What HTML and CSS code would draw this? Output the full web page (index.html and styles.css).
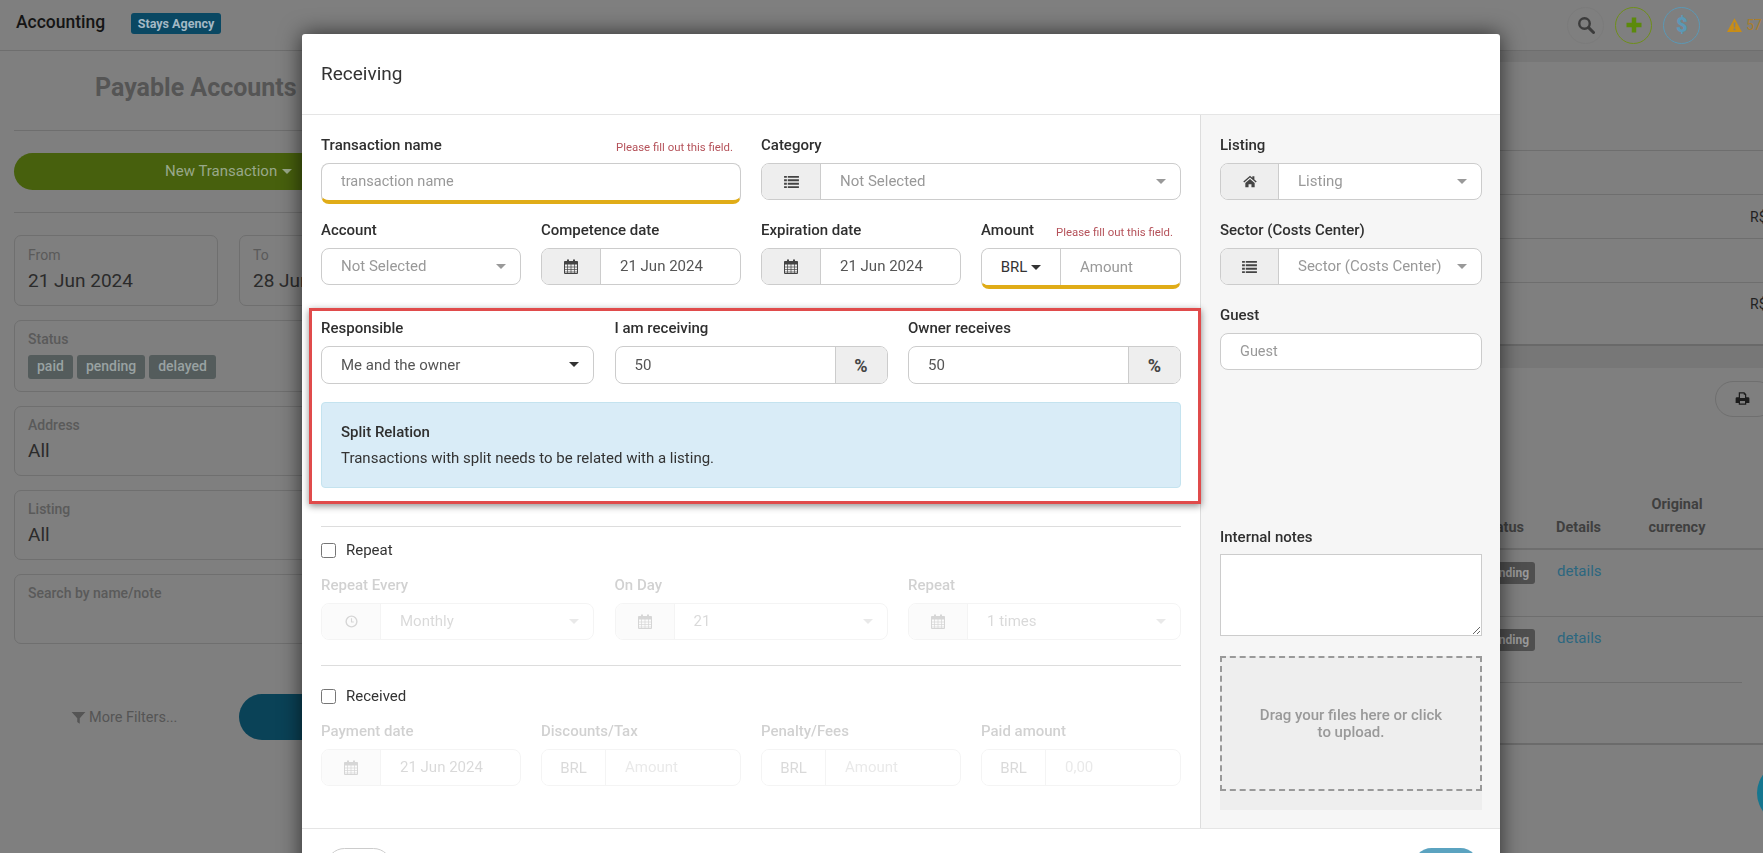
FILE: index.html
```html
<!DOCTYPE html>
<html lang="en">
<head>
<meta charset="utf-8">
<title>Accounting</title>
<link rel="stylesheet" href="styles.css">
</head>
<body>
<svg class="defs" width="0" height="0" aria-hidden="true">
  <symbol id="i-cal" viewBox="0 0 14 15"><path d="M3 0.5h2v2.5h-2zM9 0.5h2v2.5h-2z" fill="currentColor"/><path d="M0.5 2.5h13v12h-13z" fill="none" stroke="currentColor"/><path d="M0.5 2.5h13v3h-13z" fill="currentColor"/><path d="M0.5 8h13M0.5 10.5h13M0.5 13h13M3.5 5v9.5M7 5v9.5M10.5 5v9.5" stroke="currentColor" stroke-width=".7" fill="none"/></symbol>
  <symbol id="i-list" viewBox="0 0 16 14"><path d="M0 1h3v2h-3zM4 1h12v2h-12zM0 4.7h3v2h-3zM4 4.7h12v2h-12zM0 8.4h3v2h-3zM4 8.4h12v2h-12zM0 12h3v2h-3zM4 12h12v2h-12z" fill="currentColor"/></symbol>
  <symbol id="i-home" viewBox="0 0 24 22"><path d="M12 1 0.5 11l1.6 1.8L12 4.2l9.9 8.6 1.6-1.8-4-3.5V2h-3.500v2.400z" fill="currentColor"/><path d="M4 13.500 12 6.500l8 7V21h-5.500v-5.500h-5V21H4z" fill="currentColor"/></symbol>
  <symbol id="i-clock" viewBox="0 0 14 14"><circle cx="7" cy="7" r="5.800" fill="none" stroke="currentColor" stroke-width="1.500"/><path d="M7 3.500V7.500H9.500" fill="none" stroke="currentColor" stroke-width="1.200"/></symbol>
  <symbol id="i-search" viewBox="0 0 24 24"><circle cx="10" cy="10" r="7" fill="none" stroke="currentColor" stroke-width="3.200"/><path d="M15.500 15.500 22 22" stroke="currentColor" stroke-width="4" stroke-linecap="round"/></symbol>
  <symbol id="i-plus" viewBox="0 0 24 24"><path d="M9 2h6v7h7v6h-7v7H9v-7H2V9h7z" fill="currentColor"/></symbol>
  <symbol id="i-warn" viewBox="0 0 24 22"><path fill-rule="evenodd" d="M12 0 24 22H0zM10.500 7l.5 8h2l.5-8zM10.500 16.500v3h3v-3z" fill="currentColor"/></symbol>
  <symbol id="i-filter" viewBox="0 0 24 24"><path d="M1 3h22l-9 10v9l-4-3v-6z" fill="currentColor"/></symbol>
  <symbol id="i-print" viewBox="0 0 24 24"><path fill-rule="evenodd" d="M6 2h9l3 3v5h3a2 2 0 0 1 2 2v7h-5v3H6v-3H1v-7a2 2 0 0 1 2-2h3zM8 4v7h8V6h-2V4zM8 16v4h8v-4z" fill="currentColor"/></symbol>
</svg>

<div class="page">
  <header class="topbar">
    <div class="brand"><span class="brand-name">Accounting</span><span class="brand-badge">Stays Agency</span></div>
    <div class="top-actions">
      <span class="round round-grey"><svg class="i18"><use href="#i-search"/></svg></span>
      <span class="round round-green"><svg class="i18"><use href="#i-plus"/></svg></span>
      <span class="round round-blue">$</span>
      <span class="alerts"><svg class="i-alert"><use href="#i-warn"/></svg>57</span>
    </div>
  </header>

  <div class="content">
    <aside class="filters">
      <h1 class="page-title">Payable Accounts</h1>
      <hr class="rule">
      <button class="btn-new">New Transaction <i class="caret caret-light"></i></button>
      <hr class="rule rule-b">
      <div class="date-row">
        <div class="fcard"><div class="fcard-label">From</div><div class="fcard-value">21 Jun 2024</div></div>
        <div class="fcard"><div class="fcard-label">To</div><div class="fcard-value">28 Jun 2024</div></div>
      </div>
      <div class="fcard fcard-status">
        <div class="fcard-label">Status</div>
        <div class="tags"><span class="tag">paid</span><span class="tag">pending</span><span class="tag">delayed</span></div>
      </div>
      <div class="fcard"><div class="fcard-label">Address</div><div class="fcard-value">All</div></div>
      <div class="fcard"><div class="fcard-label">Listing</div><div class="fcard-value">All</div></div>
      <div class="fcard"><div class="fcard-label">Search by name/note</div></div>
      <div class="filter-actions">
        <span class="more"><svg class="i15"><use href="#i-filter"/></svg> More Filters...</span>
        <button class="btn-search">Search</button>
      </div>
    </aside>

    <main class="results">
      <div class="band"></div>
      <div class="summary summary-top"></div>
      <div class="summary summary-s"></div>
      <div class="summary summary-s summary-value"><span>R$ 0,00</span></div>
      <div class="summary summary-s"></div>
      <div class="summary summary-l summary-value"><span>R$ 0,00</span></div>
      <div class="band band-b"></div>
      <section class="panel">
        <div class="print-row"><button class="btn-print"><svg class="i15"><use href="#i-print"/></svg></button></div>
        <div class="trow thead">
          <div class="tc-status">Status</div><div class="tc-details">Details</div><div class="tc-orig">Original currency</div>
        </div>
        <div class="trow">
          <div class="tc-status"><span class="badge">pending</span></div><div class="tc-details"><span class="link">details</span></div><div></div>
        </div>
        <div class="trow trow-last">
          <div class="tc-status"><span class="badge">pending</span></div><div class="tc-details"><span class="link">details</span></div><div></div>
        </div>
      </section>
    </main>
  </div>
  <div class="fab"></div>
</div>

<div class="backdrop">
  <div class="modal">
    <div class="modal-head">Receiving</div>
    <div class="modal-body">
      <div class="modal-main">
        <div class="grid4">
          <div class="field span2">
            <div class="label-row"><label>Transaction name</label><span class="error">Please fill out this field.</span></div>
            <div class="group invalid"><input class="val val-small" placeholder="transaction name"></div>
          </div>
          <div class="field span2">
            <div class="label-row"><label>Category</label></div>
            <div class="group"><span class="addon"><svg class="i-list"><use href="#i-list"/></svg></span><div class="val muted">Not Selected<i class="caret"></i></div></div>
          </div>
          <div class="field">
            <div class="label-row"><label>Account</label></div>
            <div class="group"><div class="val muted">Not Selected<i class="caret"></i></div></div>
          </div>
          <div class="field">
            <div class="label-row"><label>Competence date</label></div>
            <div class="group"><span class="addon"><svg class="i-cal"><use href="#i-cal"/></svg></span><div class="val">21 Jun 2024</div></div>
          </div>
          <div class="field">
            <div class="label-row"><label>Expiration date</label></div>
            <div class="group"><span class="addon"><svg class="i-cal"><use href="#i-cal"/></svg></span><div class="val">21 Jun 2024</div></div>
          </div>
          <div class="field">
            <div class="label-row"><label>Amount</label><span class="error">Please fill out this field.</span></div>
            <div class="group invalid"><span class="addon addon-cur">BRL <i class="caret caret-dark"></i></span><input class="val" placeholder="Amount"></div>
          </div>
        </div>

        <section class="highlight">
          <div class="grid3">
            <div class="field">
              <div class="label-row"><label>Responsible</label></div>
              <div class="group"><div class="val">Me and the owner<i class="caret caret-dark"></i></div></div>
            </div>
            <div class="field">
              <div class="label-row"><label>I am receiving</label></div>
              <div class="group"><input class="val" value="50"><span class="addon addon-end">%</span></div>
            </div>
            <div class="field">
              <div class="label-row"><label>Owner receives</label></div>
              <div class="group"><input class="val" value="50"><span class="addon addon-end">%</span></div>
            </div>
          </div>
          <div class="alert">
            <strong>Split Relation</strong>
            <p>Transactions with split needs to be related with a listing.</p>
          </div>
        </section>

        <hr class="mrule mrule-first">
        <label class="check"><input type="checkbox">Repeat</label>
        <div class="grid3 disabled">
          <div class="field">
            <div class="label-row"><label>Repeat Every</label></div>
            <div class="group"><span class="addon"><svg class="i-clock"><use href="#i-clock"/></svg></span><div class="val">Monthly<i class="caret"></i></div></div>
          </div>
          <div class="field">
            <div class="label-row"><label>On Day</label></div>
            <div class="group"><span class="addon"><svg class="i-cal"><use href="#i-cal"/></svg></span><div class="val">21<i class="caret"></i></div></div>
          </div>
          <div class="field">
            <div class="label-row"><label>Repeat</label></div>
            <div class="group"><span class="addon"><svg class="i-cal"><use href="#i-cal"/></svg></span><div class="val">1 times<i class="caret"></i></div></div>
          </div>
        </div>

        <hr class="mrule">
        <label class="check check-b"><input type="checkbox">Received</label>
        <div class="grid4 disabled">
          <div class="field">
            <div class="label-row"><label>Payment date</label></div>
            <div class="group"><span class="addon"><svg class="i-cal"><use href="#i-cal"/></svg></span><div class="val">21 Jun 2024</div></div>
          </div>
          <div class="field">
            <div class="label-row"><label>Discounts/Tax</label></div>
            <div class="group"><span class="addon addon-brl">BRL</span><div class="val muted">Amount</div></div>
          </div>
          <div class="field">
            <div class="label-row"><label>Penalty/Fees</label></div>
            <div class="group"><span class="addon addon-brl">BRL</span><div class="val muted">Amount</div></div>
          </div>
          <div class="field">
            <div class="label-row"><label>Paid amount</label></div>
            <div class="group"><span class="addon addon-brl">BRL</span><div class="val muted">0,00</div></div>
          </div>
        </div>
      </div>

      <aside class="modal-side">
        <div class="field">
          <div class="label-row"><label>Listing</label></div>
          <div class="group"><span class="addon"><svg class="i-home"><use href="#i-home"/></svg></span><div class="val muted">Listing<i class="caret"></i></div></div>
        </div>
        <div class="field">
          <div class="label-row"><label>Sector (Costs Center)</label></div>
          <div class="group"><span class="addon"><svg class="i-list"><use href="#i-list"/></svg></span><div class="val muted">Sector (Costs Center)<i class="caret"></i></div></div>
        </div>
        <div class="field">
          <div class="label-row"><label>Guest</label></div>
          <div class="group"><input class="val val-small" placeholder="Guest"></div>
        </div>
        <div class="notes">
          <div class="label-row label-row-notes"><label>Internal notes</label></div>
          <textarea class="notes-input"></textarea>
        </div>
        <div class="upload"><div class="drop">Drag your files here or click to upload.</div></div>
      </aside>
    </div>
    <div class="modal-foot">
      <button class="btn-cancel">Cancel</button>
      <button class="btn-save">Save</button>
    </div>
  </div>
</div>
</body>
</html>
```

FILE: styles.css
```css
* { box-sizing: border-box; }
html, body { margin: 0; height: 100%; overflow: hidden; }
body { background: #7f7f7f; color: #2b2b2b; font-family: Roboto, "Liberation Sans", sans-serif; font-size: 14px; }
button { font-family: inherit; }
.defs { position: absolute; }

/* Background page */
.page { position: relative; height: 853px; overflow: hidden; }
.topbar { height: 51px; border-bottom: 1px solid #6e6e6e; display: flex; justify-content: space-between; align-items: center; padding: 0 0 6px 16px; }
.brand { display: flex; align-items: center; }
.brand-name { font-size: 17.500px; font-weight: 500; color: #151515; width: 115px; }
.brand-badge { background: #0a4863; color: #a3b9c5; font-size: 12.500px; font-weight: 700; height: 21px; line-height: 21px; border-radius: 3px; margin-top: 2px; width: 90px; text-align: center; white-space: nowrap; }
.top-actions { display: flex; align-items: center; margin-top: 6px; }
.round { width: 37px; height: 37px; border-radius: 50%; border: 1.500px solid #777; display: flex; align-items: center; justify-content: center; margin-right: 11px; }
.round-grey { color: #3c3c3c; border-color: #7b7b7b; }
.round-green { color: #5c8a0c; border-color: #6f8f1a; }
.round-blue { color: #5b98b5; border-color: #5b98b5; font-size: 20px; font-weight: 900; }
.i18 { width: 18px; height: 18px; }
.i15 { width: 15px; height: 15px; }
.alerts { display: flex; align-items: center; color: #a97d2c; font-size: 14px; margin-left: 16px; margin-right: 1px; }
.i-alert { width: 15px; height: 14px; color: #c98d16; margin-right: 4px; }

.content { display: flex; }
.filters { width: 429px; margin-left: 14px; flex: none; }
.page-title { margin: 0; height: 79px; padding: 22px 0 0 81px; font-size: 25px; line-height: 30px; font-weight: 700; color: #555; }
.rule { border: 0; border-top: 1px solid #6e6e6e; margin: 0; }
.rule-b { margin-bottom: 22px; }
.btn-new { display: block; width: 100%; height: 37px; border: 0; border-radius: 19px; margin: 22px 0; padding: 0 0 2px; background: #47600d; color: #99a88a; font-size: 15px; }
.caret { display: inline-block; border: 5.500px solid transparent; border-top-color: #999; border-bottom: 0; margin-left: auto; }
.caret-light { border-top-color: #99a88a; margin-left: 1px; vertical-align: 2px; }
.caret-dark { border-top-color: #333; }
.date-row { display: grid; grid-template-columns: 204px 204px; gap: 21px; }
.fcard { border: 1px solid #6f6f6f; border-radius: 7px; height: 70px; padding: 9px 13px; margin-bottom: 14px; }
.date-row .fcard { height: 71px; padding-top: 10px; }
.fcard-label { color: #5a5a5a; font-size: 14px; line-height: 18px; font-weight: 500; }
.date-row .fcard-label { font-weight: 400; }
.fcard-value { color: #2b2b2b; font-size: 19px; line-height: 26px; margin-top: 4px; white-space: nowrap; }
.fcard-status { height: 72px; }
.tags { display: flex; gap: 4px; margin-top: 7px; }
.tag { background: #545c5c; color: #99a2a2; font-size: 14px; font-weight: 500; height: 24px; line-height: 22px; padding: 0 9px; border-radius: 3px; }
.filter-actions { display: grid; grid-template-columns: 204px 204px; gap: 21px; margin-top: 50px; align-items: center; }
.more { color: #555; font-size: 14.500px; display: flex; align-items: center; gap: 3px; padding-left: 57px; white-space: nowrap; }
.btn-search { height: 46px; border: 0; border-radius: 23px; background: #0a4257; color: #a3b9c5; font-size: 14px; }

.results { flex: 1; min-width: 0; margin-left: 20px; }
.band { height: 11px; background: #777; }
.band-b { height: 22px; }
.summary { border-bottom: 1px solid #6e6e6e; display: flex; align-items: center; justify-content: flex-end; color: #222; }
.summary span { width: 13px; overflow: hidden; white-space: nowrap; font-size: 14px; }
.summary-top { height: 89px; }
.summary-s { height: 44px; }
.summary-l { height: 63px; border-bottom: 2px solid #696969; padding-bottom: 20px; }
.panel { height: 377px; border-bottom: 2px solid #6b6b6b; position: relative; padding-top: 13px; }
.print-row { display: flex; justify-content: flex-end; margin-right: -12px; height: 36px; margin-bottom: 67px; }
.btn-print { width: 60px; height: 36px; border: 1px solid #6f6f6f; border-radius: 18px; background: none; color: #1c1c1c; text-align: left; padding: 2px 0 0 19px; }
.trow { display: grid; grid-template-columns: minmax(0, 1fr) 87px 110px 31px; height: 67px; border-bottom: 1px solid #6e6e6e; padding-top: 12px; font-size: 15px; }
.thead { height: 66px; border-bottom: 2px solid #6e6e6e; padding: 0; align-items: end; font-weight: 700; color: #3f3f3f; font-size: 14.500px; }
.thead > div { padding-bottom: 9px; line-height: 23px; }
.thead .tc-status { padding-right: 11px; }
.thead .tc-details { padding-left: 21px; }
.thead .tc-orig { padding: 0 20px 9px; }
.trow-last { margin-right: 21px; height: 66px; grid-template-columns: minmax(0, 1fr) 87px 110px 10px; }
.tc-status { text-align: right; }
.tc-details { padding-left: 22px; }
.tc-orig { text-align: center; }
.badge { display: inline-block; background: #4f4f4f; color: #999; font-size: 12px; font-weight: 700; height: 22px; line-height: 22px; padding: 0 6px; border-radius: 3px; }
.link { color: #2c6780; }
.fab { position: absolute; left: 1757px; top: 762px; width: 62px; height: 62px; border-radius: 50%; background: #15768f; }

/* Modal */
.backdrop { position: fixed; inset: 0; padding: 34px 0 0 302px; }
.modal { width: 1198px; background: #fff; border-radius: 3px 3px 0 0; box-shadow: 0 0 22px rgba(0,0,0,.65); color: #333; }
.modal-head { height: 81px; border-bottom: 1px solid #e5e5e5; padding-left: 19px; font-size: 19px; line-height: 79px; }
.modal-body { display: flex; height: 713px; }
.modal-main { width: 899px; flex: none; border-right: 1px solid #ddd; padding: 20px 19px 0; }
.modal-side { flex: 1; background: #f6f6f6; padding: 20px 18px 0 19px; min-width: 0; }
.modal-side .field { margin-bottom: 20px; }
.modal-side .addon { width: 58px; }
.modal-foot { display: flex; justify-content: space-between; border-top: 1px solid #e5e5e5; padding: 19px 21px 0 24px; height: 60px; }
.btn-cancel, .btn-save { width: 66px; height: 37px; border-radius: 19px; font-size: 14px; flex: none; }
.btn-cancel { background: #fff; border: 1px solid #ccc; color: #333; }
.btn-save { background: #5ba3c0; border: 0; color: #fff; }

.grid4 { display: grid; grid-template-columns: repeat(4, minmax(0, 1fr)); gap: 20px; }
.grid3 { display: grid; grid-template-columns: repeat(3, minmax(0, 1fr)); gap: 20.500px; }
.span2 { grid-column: span 2; }
.label-row { display: flex; justify-content: space-between; height: 20px; margin-bottom: 8px; align-items: center; }
.label-row label { font-weight: 500; font-size: 15px; color: #2f2f2f; white-space: nowrap; }
.error { color: #b5525a; font-size: 11.400px; padding: 4px 8px 0 0; white-space: nowrap; }
.group { display: flex; height: 37px; border: 1px solid #ccc; border-radius: 8px; overflow: hidden; background: #fff; }
.group.invalid { height: 41px; margin-bottom: -4px; border-bottom: 4px solid #e0ac17; }
.highlight .group { height: 38px; }
.addon { width: 59px; flex: none; background: #eee; border-right: 1px solid #ccc; display: flex; align-items: center; justify-content: center; color: #444; }
.addon-end { width: 52px; border-right: 0; border-left: 1px solid #ccc; font-weight: 700; font-size: 18px; }
.addon-cur { width: 79px; background: #fff; color: #333; gap: 4px; font-size: 15px; }
.addon-cur .caret { margin-left: 0; }
.addon-brl { width: 64px; background: #fff; color: #555; font-size: 15px; }
.val { flex: 1; min-width: 0; border: 0; outline: 0; padding: 0 14px 1px 19px; display: flex; align-items: center; font: 15px Roboto, "Liberation Sans", sans-serif; color: #555; background: transparent; white-space: nowrap; }
.val-small { font-size: 14.500px; }
.val::placeholder { color: #999; opacity: 1; }
.val.muted { color: #999; }
.i-list { width: 15px; height: 13px; }
.i-cal { width: 14px; height: 15px; }
.i-home { width: 14px; height: 13px; }
.i-clock { width: 13px; height: 13px; }

.highlight { position: relative; border: 3px solid #e04b4b; margin: 23px -20px 0 -12px; padding: 7px 17px 13px 9px; box-shadow: 0 2px 7px rgba(0,0,0,.45); }
.alert { margin-top: 18px; height: 86px; background: #d9ecf7; border: 1px solid #c4e3ef; border-radius: 4px; padding: 0 19px; display: flex; flex-direction: column; justify-content: center; font-size: 15px; }
.alert strong { font-weight: 500; line-height: 20px; color: #2f2f2f; }
.alert p { margin: 6px 0 0; line-height: 20px; color: #333; }

.mrule { border: 0; border-top: 1px solid #ddd; margin: 25px 0 0; }
.mrule-first { margin-top: 22px; }
.check { display: flex; align-items: center; height: 20px; margin: 13px 0 15px; color: #333; font-size: 15px; }
.check-b { margin-top: 20px; }
.check input { width: 15px; height: 15px; margin: 0 10px 0 0; }
.disabled { opacity: .22; }

.notes { margin-top: 157px; }
.label-row-notes { margin-bottom: 7px; }
.notes-input { display: block; width: 100%; height: 82px; border: 1px solid #ccc; background: #fff; border-radius: 0; outline: 0; resize: vertical; }
.upload { margin-top: 20px; height: 154px; background: #eee; }
.drop { height: 135px; border: 2px dashed #999; display: flex; align-items: center; text-align: center; color: #999; font-size: 15px; font-weight: 500; line-height: 17px; padding: 0 34px; }
```
